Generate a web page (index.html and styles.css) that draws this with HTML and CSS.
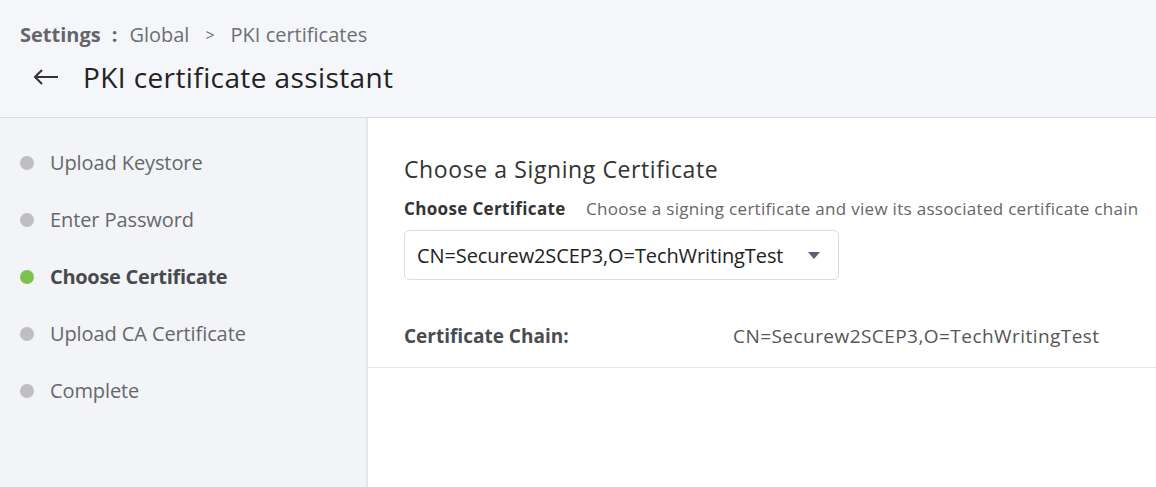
FILE: index.html
```html
<!DOCTYPE html>
<html>
<head>
<meta charset="utf-8">
<link rel="stylesheet" href="styles.css">
</head>
<body>
<header class="header">
  <div class="crumbs">
    <span class="crumb-root">Settings</span>
    <span class="crumb-colon">:</span>
    <span class="crumb">Global</span>
    <span class="crumb-sep">&gt;</span>
    <span class="crumb">PKI certificates</span>
  </div>
  <div class="title-row">
    <svg class="back" width="26" height="16" viewBox="0 0 26 16"><path d="M25 8H2M9 1L2 8l7 7" fill="none" stroke="#333" stroke-width="2"/></svg>
    <h1 class="title">PKI certificate assistant</h1>
  </div>
</header>
<div class="body">
  <nav class="steps">
    <div class="step"><span class="dot"></span>Upload Keystore</div>
    <div class="step"><span class="dot"></span>Enter Password</div>
    <div class="step active"><span class="dot"></span>Choose Certificate</div>
    <div class="step"><span class="dot"></span>Upload CA Certificate</div>
    <div class="step"><span class="dot"></span>Complete</div>
  </nav>
  <main class="main">
    <div class="section">
      <h2 class="heading">Choose a Signing Certificate</h2>
      <div class="label-row">
        <span class="label">Choose Certificate</span>
        <span class="desc">Choose a signing certificate and view its associated certificate chain</span>
      </div>
      <div class="select">
        <span class="select-text">CN=Securew2SCEP3,O=TechWritingTest</span>
        <svg class="caret" width="12" height="7" viewBox="0 0 12 7"><path d="M0 0h12L6 7z" fill="#5a6372"/></svg>
      </div>
      <div class="chain">
        <span class="chain-label">Certificate Chain:</span>
        <span class="chain-value">CN=Securew2SCEP3,O=TechWritingTest</span>
      </div>
    </div>
  </main>
</div>
</body>
</html>
```
FILE: styles.css
```css
* { box-sizing: border-box; }
html, body { margin: 0; padding: 0; height: 100%; }
body {
  font-family: "Open Sans", "Lato", sans-serif;
  background: #fff;
  color: #333;
  display: flex;
  flex-direction: column;
  overflow: hidden;
}
.header {
  height: 118px;
  background: #f5f6fa;
  border-bottom: 1px solid #dcdde2;
  padding: 22px 0 0 20px;
  flex-shrink: 0;
}
.crumbs {
  display: flex;
  align-items: center;
  font-size: 20px;
  line-height: 26px;
  color: #6e6f73;
}
.crumb-root { font-weight: 700; color: #65666a; }
.crumb-colon { font-weight: 700; margin: 0 12px 0 11px; color: #65666a; }
.crumb-sep { margin: 0 16px 0 16px; font-size: 16px; }
.title-row {
  display: flex;
  align-items: center;
  margin-top: 12px;
  padding-left: 13px;
}
.back { margin-right: 24px; }
.title {
  margin: 0;
  font-size: 28px;
  letter-spacing: 0.4px;
  font-weight: 500;
  color: #222;
  line-height: 34px;
}
.body { flex: 1; display: flex; }
.steps {
  width: 368px;
  background: #f3f4f8;
  border-right: 1px solid #e4e5e9;
  box-shadow: inset -3px 0 3px -2px rgba(0,0,0,0.05);
  padding-top: 16px;
  padding-left: 20px;
}
.step {
  display: flex;
  align-items: center;
  height: 57px;
  font-size: 20px;
  letter-spacing: -0.1px;
  color: #66676b;
}
.dot {
  width: 14px;
  height: 14px;
  border-radius: 50%;
  background: #bfbfbf;
  margin-right: 16px;
}
.step.active { font-weight: 700; color: #48494d; letter-spacing: -0.3px; }
.step.active .dot { background: #7dc24b; }
.main { flex: 1; }
.section {
  padding: 36px 0 0 36px;
  border-bottom: 1px solid #e6e7ea;
  height: 250px;
}
.heading {
  margin: 0;
  font-size: 23px;
  letter-spacing: 0.6px;
  font-weight: 400;
  color: #333;
  line-height: 30px;
}
.label-row {
  margin-top: 13px;
  font-size: 17px;
  line-height: 24px;
}
.label { font-weight: 700; color: #333; margin-right: 16px; letter-spacing: 0.35px; }
.desc { color: #666; letter-spacing: 0.3px; }
.select {
  margin-top: 9px;
  width: 435px;
  height: 50px;
  border: 1px solid #dcdcdc;
  border-radius: 5px;
  display: flex;
  align-items: center;
  padding: 0 18px 0 12px;
  justify-content: space-between;
}
.select-text { font-size: 20px; color: #222; letter-spacing: -0.1px; }
.chain {
  display: flex;
  align-items: center;
  margin-top: 43px;
  font-size: 19px;
}
.chain-label { width: 329px; font-weight: 700; color: #4a4b4f; }
.chain-value { color: #555; letter-spacing: 0.45px; }
```
